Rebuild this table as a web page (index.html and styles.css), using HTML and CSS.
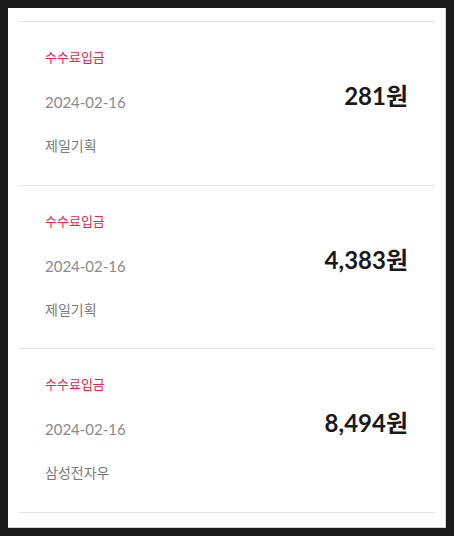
FILE: index.html
```html
<!DOCTYPE html>
<html lang="ko">
<head>
<meta charset="utf-8">
<title>수수료입금 내역</title>
<link rel="stylesheet" href="styles.css">
</head>
<body>
<div class="panel">
  <ul class="list">
    <li class="item">
      <div class="info">
        <div class="type">수수료입금</div>
        <div class="date">2024-02-16</div>
        <div class="name">제일기획</div>
      </div>
      <div class="amount">281원</div>
    </li>
    <li class="item">
      <div class="info">
        <div class="type">수수료입금</div>
        <div class="date">2024-02-16</div>
        <div class="name">제일기획</div>
      </div>
      <div class="amount">4,383원</div>
    </li>
    <li class="item">
      <div class="info">
        <div class="type">수수료입금</div>
        <div class="date">2024-02-16</div>
        <div class="name">삼성전자우</div>
      </div>
      <div class="amount">8,494원</div>
    </li>
  </ul>
</div>
</body>
</html>
```
FILE: styles.css
```css
html {
  background: #1a1a1a;
}
body {
  margin: 8px;
  height: 520px;
  background: #ffffff;
  font-family: Lato, "Noto Sans CJK KR", sans-serif;
  overflow: hidden;
}
.panel {
  height: 520px;
  box-sizing: border-box;
  padding: 13px 11px 0 11px;
  box-shadow: inset -1px -1px 0 #d6d6d6;
}
.list {
  list-style: none;
  margin: 0;
  padding: 0;
  border-bottom: 1px solid #e6e6e6;
}
.item {
  display: flex;
  justify-content: space-between;
  align-items: flex-start;
  border-top: 1px solid #e6e6e6;
  padding: 25px 27px 0 26px;
  height: 137.67px;
}
.info {
  display: flex;
  flex-direction: column;
}
.type {
  font-size: 13px;
  line-height: 20px;
  color: #e0294f;
}
.date {
  margin-top: 25px;
  font-size: 15px;
  line-height: 20px;
  color: #8a8a8a;
}
.name {
  margin-top: 24px;
  font-size: 14px;
  line-height: 20px;
  color: #7a7a7a;
}
.amount {
  margin-top: 34px;
  font-size: 24px;
  line-height: 30px;
  font-weight: 700;
  color: #1a1a1a;
}
```
